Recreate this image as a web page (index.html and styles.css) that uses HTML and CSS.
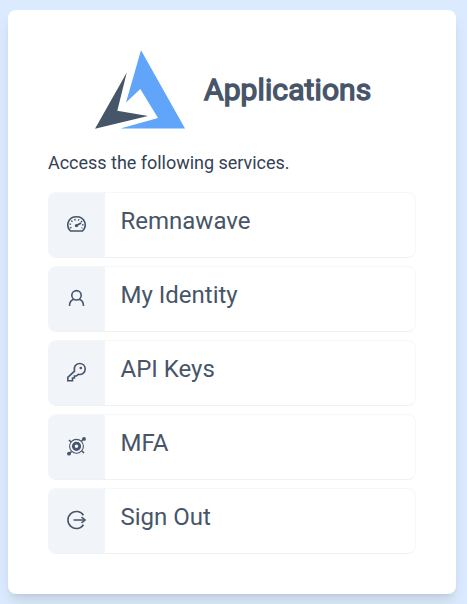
FILE: index.html
```html
<!DOCTYPE html>
<html lang="en">
<head>
<meta charset="utf-8">
<title>Applications</title>
<link rel="stylesheet" href="styles.css">
</head>
<body>
<main class="card">
  <header class="brand">
    <svg class="logo" viewBox="0 0 90 80" aria-hidden="true">
      <path fill="#60a5fa" d="M46 .3 90 78.6H25.5L63 68 45.3 39 31 52.5z"/>
      <path fill="#475569" d="M31.8 22.5 22.3 60.7 53 66 0 78.8z"/>
    </svg>
    <h1 class="title">Applications</h1>
  </header>
  <p class="intro">Access the following services.</p>
  <nav class="services">
    <a class="service">
      <span class="service-icon"><svg viewBox="-0.5 0 20 20"><path d="M4 17C-1.200 12 1.400 2.700 10 2.700s11.200 9.300 6 14.300z"/><path d="m10 11.500 4.600-2.600" stroke-width="1.700"/><circle class="solid" cx="10" cy="11.600" r="1.700"/><path stroke-dasharray="1.300 2.200" d="M4.500 14.300C2.300 9 5.300 5.600 10 5.600s7.700 3.400 5.500 8.700"/></svg></span>
      <span class="service-name">Remnawave</span>
    </a>
    <a class="service">
      <span class="service-icon"><svg viewBox="-0.5 0 20 20"><circle cx="10" cy="7.300" r="4.700"/><path d="M3 18c0-3.600 1.800-5.900 4.500-6.700M17 18c0-3.600-1.800-5.900-4.500-6.700"/></svg></span>
      <span class="service-name">My Identity</span>
    </a>
    <a class="service">
      <span class="service-icon"><svg viewBox="-0.5 0 20 20"><path d="M8 9.200C6.900 4.900 9.300 1.500 13 1.500c3.400 0 5.700 2.300 5.700 5.400 0 3.900-3.300 6.300-7 5.400l-1.900 1.700H7.900v2H6v2.800H1.300v-3.500z"/><circle class="solid" cx="14.300" cy="6" r="1.300"/></svg></span>
      <span class="service-name">API Keys</span>
    </a>
    <a class="service">
      <span class="service-icon"><svg viewBox="-0.5 0 20 20"><circle cx="10" cy="10.300" r="6.900" stroke-width="1.100"/><circle cx="10" cy="10.300" r="3.200" stroke-width="2.800"/><path d="m15 5 2-2M5 15.500l-2 2M2.500 4l2 2M15.500 15l2 2"/><circle class="solid" cx="17.500" cy="2.900" r="1.900"/><circle class="solid" cx="2.500" cy="17.700" r="1.900"/></svg></span>
      <span class="service-name">MFA</span>
    </a>
    <a class="service">
      <span class="service-icon"><svg viewBox="-0.5 0 20 20"><path d="M17 5.300A8.500 8.500 0 1 0 17 14.700M7 10h11.500"/><path d="m15 7 3.500 3-3.500 3"/></svg></span>
      <span class="service-name">Sign Out</span>
    </a>
  </nav>
</main>
</body>
</html>
```
FILE: styles.css
```css
* {
  box-sizing: border-box;
}

body {
  margin: 0;
  padding: 10px 11px 10px 8px;
  height: 604px;
  overflow: hidden;
  background: #dbeafe;
  color: #334155;
  font-family: Roboto, sans-serif;
}

.card {
  height: 584px;
  padding: 40px;
  border-radius: 8px;
  background: #fff;
  box-shadow: 0 10px 15px -3px rgb(0 0 0 / 0.1), 0 4px 6px -4px rgb(0 0 0 / 0.1);
}

.brand {
  display: flex;
  align-items: center;
  gap: 19px;
  height: 80px;
  padding-left: 47px;
}

.logo {
  width: 90px;
  height: 80px;
}

.title {
  margin: 0;
  color: #475569;
  font-size: 30px;
  font-weight: 400;
  line-height: 36px;
  letter-spacing: 0.1px;
  -webkit-text-stroke: 1.4px #475569;
}

.intro {
  margin: 19px 0 15px;
  font-size: 18px;
  line-height: 28px;
  letter-spacing: -0.02px;
}

.services {
  display: grid;
  gap: 8px;
}

.service {
  display: flex;
  height: 66px;
  overflow: hidden;
  border: 1px solid #f6f7f9;
  border-left: 0;
  border-bottom-color: #eff1f3;
  border-radius: 8px;
  color: #475569;
}

.service-icon {
  display: flex;
  align-items: center;
  justify-content: center;
  width: 57px;
  padding: 0 1px 2px 0;
  background: #f1f5f9;
}

.service-icon svg {
  width: 20px;
  height: 20px;
  fill: none;
  stroke: #475569;
  stroke-width: 1.6;
}

.service-icon .solid {
  fill: #475569;
  stroke: none;
}

.service-name {
  padding: 12px 15.5px;
  font-size: 24px;
  line-height: 32px;
}
```
